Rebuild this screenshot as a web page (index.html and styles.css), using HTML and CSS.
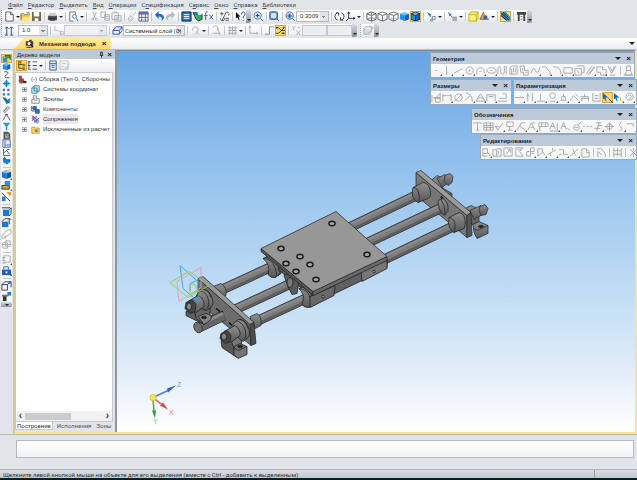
FILE: index.html
```html
<!DOCTYPE html>
<html lang="ru">
<head>
<meta charset="utf-8">
<meta name="viewport" content="width=device-width, initial-scale=1">
<title>Механизм подвода</title>
<link rel="stylesheet" href="styles.css">
</head>
<body>
<nav class="menu" aria-label="Главное меню">
  <a href="#"><u>Ф</u>айл</a><a href="#"><u>Р</u>едактор</a><a href="#"><u>В</u>ыделить</a><a href="#"><u>В</u>ид</a><a href="#"><u>О</u>перации</a><a href="#">С<u>п</u>ецификация</a><a href="#">С<u>е</u>рвис</a><a href="#"><u>О</u>кно</a><a href="#"><u>С</u>правка</a><a href="#"><u>Б</u>иблиотеки</a>
</nav>

<div class="bars">
  <div class="toolbar grip" role="toolbar" aria-label="Стандартная">
    <span class="tools" data-set="standard"></span><span class="cap"></span>
  </div>
  <div class="toolbar" role="toolbar" aria-label="Вид">
    <span class="tools" data-set="zoom"></span>
    <select class="combo scale" aria-label="Масштаб"><option>0.3009</option></select>
    <span class="tools" data-set="view"></span><span class="cap"></span>
  </div>
</div>

<div class="bars">
  <div class="toolbar grip" role="toolbar" aria-label="Текущее состояние">
    <span class="tools" data-set="step"></span>
    <select class="combo step" aria-label="Шаг курсора"><option>1.0</option></select>
    <span class="tools" data-set="state"></span>
    <select class="combo off" aria-label="Состояние" disabled><option></option></select>
    <span class="tools" data-set="layer"></span>
    <select class="combo layer" aria-label="Слой"><option>Системный слой (0)</option></select>
    <span class="tools" data-set="snap"></span>
    <input class="coord" aria-label="X" disabled><input class="coord" aria-label="Y" disabled><span class="cap"></span>
  </div>
  <div class="toolbar grip" role="toolbar" aria-label="Режимы">
    <span class="tools" data-set="mode"></span><span class="cap"></span>
  </div>
</div>

<div class="tabstrip">
  <div class="doctab">
    <svg viewBox="0 0 12 12" aria-hidden="true"><path d="M1 3h4l1-2h3v2h2v6H1z" fill="#444"/><circle cx="5.500" cy="6" r="2" fill="#fff"/><path d="M7 7l4 4M2 11h7" stroke="#222" stroke-width="1.500"/></svg>
    <span>Механизм подвода</span><button class="x" aria-label="Закрыть">×</button>
  </div>
  <button class="tri" aria-label="Список окон"></button>
</div>

<main class="work">
  <div class="sidebar" role="toolbar" aria-label="Компактная панель">
    <span class="tools first" data-set="side1"></span>
    <span class="tools" data-set="side2"></span><span class="cap"></span>
  </div>
  <section class="document">
    <aside class="tree">
      <header class="bar"><h2>Дерево модели</h2>
        <button aria-label="Закрепить"><svg viewBox="0 0 6 8"><path d="M1 5h4M2 5V1h2v4M3 5v3" stroke="#222" fill="none"/></svg></button><button class="x" aria-label="Закрыть">×</button></header>
      <div class="treetools"><span class="tools" data-set="tree"></span></div>
      <ul class="nodes">
        <li class="root"><svg viewBox="0 0 12 12"><path d="M1 1h4v4h3v3h3v3H2z" fill="#655"/><path d="M2 2l6 6M1 7l4 4" stroke="#d33" stroke-width="2"/><path d="M7 9h4" stroke="#222" stroke-width="2"/></svg>(-) Сборка (Тел-0, Сборочны</li>
        <li><button aria-label="Развернуть"></button><svg viewBox="0 0 12 12"><path d="M4 1h7v7H4zM1 4h7v7H1zM1 4l3-3M8 11l3-3" fill="#bfeaf5" stroke="#27759c"/></svg>Системы координат</li>
        <li><button aria-label="Развернуть"></button><svg viewBox="0 0 12 12"><path d="M3 1h4v4h4v6H1V6h2z" fill="#eee" stroke="#777"/><path d="M4 4v3h4" fill="none" stroke="#999"/></svg>Эскизы</li>
        <li><button aria-label="Развернуть"></button><svg viewBox="0 0 12 12"><path d="M1 1v7h5M1 4h5" fill="none" stroke="#222"/><path d="M3 2h4v4H3zM6 6h5v5H6z" fill="#267cd2" stroke="#154b99"/></svg>Компоненты</li>
        <li class="sel"><button aria-label="Развернуть"></button><svg viewBox="0 0 12 12"><path d="M1 1h6l4 5v5H6L1 6z" fill="#cdd2f4"/><path d="M2 1l9 8M1 4l8 7M1 8l7-7M4 10l7-6" stroke="#3c42ac"/><path d="M2 3l7 7M1 1l3 3" stroke="#c34b5c"/></svg><span>Сопряжения</span></li>
        <li><button aria-label="Развернуть"></button><svg viewBox="0 0 12 12"><path d="M1 3h4l1 1h5v7H1z" fill="#f5d56b" stroke="#bd912f"/><path d="M5 6h4v3H5z" fill="#777"/></svg>Исключенные из расчет</li>
      </ul>
      <div class="scroll"><button aria-label="Влево">‹</button><span class="thumb"></span><button aria-label="Вправо">›</button></div>
      <div class="treetabs"><button class="on">Построение</button><button>Исполнения</button><button>Зоны</button></div>
    </aside>

    <div class="viewport">
      <svg class="model" viewBox="117 50 518 382" preserveAspectRatio="xMidYMid slice" role="img" aria-label="Модель">
        <defs>
          <linearGradient id="body" x1="0" y1="0" x2="0" y2="1"><stop offset="0" stop-color="#909090"/><stop offset="1" stop-color="#575757"/></linearGradient>
          <g id="hole"><ellipse rx="3.800" ry="3" fill="#1c1c1c"/><ellipse rx="2.200" ry="1.500" fill="#aaa"/></g>
        </defs>
        <!-- far bearings -->
        <g stroke="#262626" stroke-width=".7" fill="url(#body)">
          <path d="M430 181l7-6 5 2v10l10 6v6l-8-3-10-9z"/>
          <path d="M437 178l8-4 5 7-8 6z"/><path d="M445 175l5-2 3 3-1 6-4 3-4-4z"/>
          <path d="M465 208l6-3 8 4v16l-8-1z"/><path d="M470 210l11-5 3 8-10 6z"/><path d="M480 206l5-2 3 4-2 6-5 1-2-5z"/>
          <path d="M473 224l6-3 9 4v8l-11 5-3-6z"/><path d="M474 228l3 2 11-5" fill="none"/><ellipse cx="481" cy="226" rx="2.500" ry="1.200" fill="#222"/>
        </g>
        <!-- far end plate -->
        <g stroke="#262626" stroke-width=".7">
          <path d="M416 172l51 43v22l-51-42z" fill="#777"/>
          <path d="M416 172l5-2 50 42-4 3z" fill="#9b9b9b"/><path d="M467 215l4-3 1 23-5 2z" fill="#555"/>
          <path d="M441 196l2 3" stroke="#111" stroke-width="2"/>
        </g>
        <!-- far rods -->
        <g stroke="#262626" stroke-width="10"><path d="M345 229L416 195M366 243L442 207M380 261L453 226"/></g>
        <g stroke="#5e5e5e" stroke-width="9"><path d="M345 229L416 195M366 243L442 207M380 261L453 226"/></g>
        <g stroke="#7d7d7d" stroke-width="5"><path d="M345 228L416 194M366 242L442 206M380 260L453 225"/></g>
        <g stroke="#8c8c8c" stroke-width="2"><path d="M345 226L416 192M366 240L442 204M380 258L453 223"/></g>
        <g stroke="#262626" stroke-width=".8" fill="url(#body)">
          <path d="M413 187l10-5q5 0 7 7t-2 9l-10 4q-8-4-5-15z"/><path d="M413 187q5 0 6 7t-1 8" fill="none"/>
          <path d="M438 200l5-2q6 4 5 13l-4 4q-6-5-6-15z"/><path d="M441 199q5 7 4 15" fill="none"/>
          <path d="M449 217l10-5q5 1 6 7t-1 9l-10 4q-7-4-5-15z"/><path d="M449 217q6 1 6 8t-1 7" fill="none"/>
        </g>
        <!-- near rods between end plate and table -->
        <g stroke="#262626" stroke-width="10"><path d="M220 290L270 267M203 324L291 283M256 321L308 297"/></g>
        <g stroke="#5e5e5e" stroke-width="9"><path d="M220 290L270 267M203 324L291 283M256 321L308 297"/></g>
        <g stroke="#7d7d7d" stroke-width="5"><path d="M220 289L270 266M203 323L291 282M256 320L308 296"/></g>
        <g stroke="#8c8c8c" stroke-width="2"><path d="M220 287L270 264M203 321L291 280M256 318L308 294"/></g>
        <!-- bushings under the table -->
        <g stroke="#222" stroke-width=".8" fill="url(#body)">
          <path d="M263 258l6-3 11 5 1 13-6 4q-4 1-7-3 3-10-5-16z"/><path d="M263 258q9 0 12 9t0 10M266 257q8 1 12 9t0 9" fill="none"/>
          <path d="M278 269l14 11 10 8v-8l-20-14z" fill="#555"/>
          <path d="M284 275l5-2 10 8-2 12-5 1-4-8z" fill="#5a5a5a"/><ellipse cx="290" cy="282" rx="3" ry="5" fill="#777"/>
          <path d="M310 293l25-9 26-12 26-14v9l-25 13-27 13-22 12z" fill="#606060"/>
          <path d="M361 271l26-12v9l-25 13z" fill="#777"/>
          <path d="M299 288l7-2q7 4 7 12v7l-5 2q-5 0-6-4 4-8-3-15z"/><path d="M299 288q9 1 11 9t-1 10M303 287q8 3 9 10" fill="none"/>
          <path d="M310 296l25-11-1 10-24 12z" fill="#686868"/>
          <circle cx="374" cy="271" r="1.300" fill="#999"/><circle cx="323" cy="296" r="1.300" fill="#999"/>
        </g>
        <!-- table -->
        <g stroke="#202020" stroke-width=".7">
          <path d="M261 248v3l52 44v-4z" fill="#555"/><path d="M313 291v4l74-35v-4z" fill="#6a6a6a"/>
          <path d="M261 248l75-37 51 45-74 35z" fill="#979797"/>
        </g>
        <use href="#hole" x="281" y="248"/><use href="#hole" x="300" y="256"/><use href="#hole" x="286" y="263"/><use href="#hole" x="310" y="264"/><use href="#hole" x="296" y="271"/><use href="#hole" x="316" y="279"/><use href="#hole" x="332" y="223"/><use href="#hole" x="367" y="254"/>
        <!-- near end plate -->
        <g stroke="#222" stroke-width=".7">
          <path d="M213 286l8-3q4 2 5 7v5l-8 4z" fill="url(#body)"/>
          <path d="M250 316l7-3q4 2 4 7v5l-8 4z" fill="url(#body)"/>
          <path d="M198 278l52 46 1 21-53-43z" fill="#6c6c6c"/>
          <path d="M198 278l5-2 51 46-4 2z" fill="#999"/><path d="M250 324l4-2 2 21-5 2z" fill="#4d4d4d"/>
          <path d="M216 308l4 3M218 313l5-2M229 322l3 3" stroke="#111" stroke-width="1.500"/>
        </g>
        <g stroke="#222" stroke-width="10"><path d="M199 327L224 315"/></g><g stroke="#656565" stroke-width="9"><path d="M199 327L224 315"/></g><g stroke="#8b8b8b" stroke-width="3"><path d="M198 325L223 313"/></g>
        <ellipse cx="198" cy="327" rx="4" ry="5.500" fill="#6e6e6e" stroke="#222" stroke-width=".7" transform="rotate(-24 198 327)"/>
        <!-- near bearings -->
        <g stroke="#222" stroke-width=".8" fill="url(#body)">
          <path d="M186 311l8-3 10 8v8l-18-9z" fill="#5d5d5d"/><path d="M194 308l16-6v15l-6 7-8-6z" fill="#646464"/><path d="M198 316l8-3 5 2v4l-7 5z" fill="#858585"/><ellipse cx="204" cy="317" rx="2.500" ry="1.200" fill="#222"/>
          <path d="M196 296l4-7q7-2 11 6t0 12l-5 3-8-3z"/><path d="M199 290q7 1 9 8t-1 10M203 289q6 1 8 8" fill="none"/>
          <path d="M188 301l10-6q7 3 6 11l-9 7z"/><path d="M186 302l6-3 4 5-1 7-5 2-5-5z" fill="#444"/><ellipse cx="189" cy="306" rx="2.500" ry="3.500" fill="#888"/>
          <path d="M221 340l8-3 8 12v8l-15-10z" fill="#575757"/><path d="M229 335l11-6 2 17-5 9z" fill="#777"/><path d="M234 346l6-3 7 3v8l-9 4-4-4z" fill="#747474"/><path d="M234 347l4 3 9-4" fill="none"/><ellipse cx="240" cy="346" rx="2.500" ry="1.200" fill="#222"/>
          <path d="M233 324l5-5q7-1 10 7t0 11l-5 4-8-6z"/><path d="M236 320q7 2 9 9t-1 10M240 319q6 2 8 9" fill="none"/>
          <path d="M224 331l11-6q6 4 5 10l-9 7z"/><path d="M221 333l6-3 4 5-1 6-5 2-5-5z" fill="#444"/><ellipse cx="224" cy="336" rx="2.500" ry="3.500" fill="#888"/>
        </g>
        <!-- datum planes -->
        <g fill="none" stroke-width=".9">
          <path d="M180 265l19 17v20l-16-14zM190 283l14-6M190 283v8" stroke="#3fa0e8"/><path d="M201 267v20l-22 14-2-20z" stroke="#ec9cae"/><path d="M170 282l19-11 20 14-21 12zM190 285v9l8-4-4-7z" stroke="#8ccf4a"/>
        </g>
        <!-- axis triad -->
        <path d="M153 397l15-7" stroke="#4a7fdc" stroke-width="1.600"/><path d="M167 388l9-3-8 7z" fill="#2d62c8"/>
        <path d="M153 397l10 8" stroke="#e35b5b" stroke-width="1.600"/><path d="M163 402l5 7-8-4z" fill="#e04242"/>
        <path d="M153 397l1 15" stroke="#56b060" stroke-width="1.600"/><path d="M152 410h4l-1 8z" fill="#2e9a3e"/>
        <circle cx="153" cy="397" r="3.200" fill="#f3e556" stroke="#c6b432" stroke-width=".6"/>
        <text x="177" y="386" fill="#7298dd">Z</text><text x="169" y="414" fill="#e07c86">X</text><text x="153" y="423" fill="#7cc486">Y</text>
      </svg>

      <section class="palette geo"><header class="bar"><h2>Геометрия</h2><button class="tri" aria-label="Меню"></button><button class="x" aria-label="Закрыть">×</button></header><div class="tools" data-set="geometry"></div></section>
      <section class="palette dim"><header class="bar"><h2>Размеры</h2><button class="tri" aria-label="Меню"></button><button class="x" aria-label="Закрыть">×</button></header><div class="tools" data-set="dimensions"></div></section>
      <section class="palette par"><header class="bar"><h2>Параметризация</h2><button class="tri" aria-label="Меню"></button><button class="x" aria-label="Закрыть">×</button></header><div class="tools" data-set="constraints"></div></section>
      <section class="palette ann"><header class="bar"><h2>Обозначения</h2><button class="tri" aria-label="Меню"></button><button class="x" aria-label="Закрыть">×</button></header><div class="tools" data-set="annotations"></div></section>
      <section class="palette edi"><header class="bar"><h2>Редактирование</h2><button class="tri" aria-label="Меню"></button><button class="x" aria-label="Закрыть">×</button></header><div class="tools" data-set="editing"></div></section>
    </div>
  </section>
</main>

<div class="properties"><input aria-label="Панель свойств" readonly></div>
<footer class="status"><span>Щелкните левой кнопкой мыши на объекте для его выделения (вместе с Ctrl - добавить к выделенным)</span></footer>
<script src="app.js"></script>
</body>
</html>
```

FILE: styles.css
```css
* { box-sizing: border-box; }
body {
  margin: 0; height: 100vh; overflow: hidden;
  display: flex; flex-direction: column;
  background: #e1e5e9; color: #333;
  font: 6px/10px "Liberation Sans", Arial, sans-serif;
  border-bottom: 2px solid #0c1c20;
}
button, select, input { font: inherit; color: inherit; margin: 0; padding: 0; border: 0; background: none; }
svg { display: block; flex: none; }

.menu { display: flex; gap: 5px; padding-left: 8px; height: 10px; flex: none; white-space: nowrap; font-family: Roboto, "Liberation Sans", sans-serif; }
.menu a { color: #444a52; text-decoration: none; }

.bars { display: flex; gap: 2px; height: 13px; flex: none; margin-bottom: 1px; }
.toolbar { display: flex; align-items: center; height: 13px; background: linear-gradient(#fff, #f3f5f7 60%, #dfe3e7); }
.grip { border-left: 1px dotted #9aa; margin-left: 1px; padding-left: 2px; }
.tools { display: flex; align-items: center; flex: none; }
.tool { position: relative; width: 11px; height: 11px; flex: none; display: flex; align-items: center; justify-content: center; }
.tool svg { width: 11px; height: 11px; }
.tool.on { background: #ffd873; outline: 1px solid #d9a640; outline-offset: -1px; }
.tool.more::after { content: ""; position: absolute; right: 0; bottom: 0; border: 1px solid #555; border-top-color: transparent; border-left-color: transparent; }
.sep { width: 5px; height: 9px; flex: none; background: linear-gradient(#c3c8ce, #c3c8ce) center / 1px 100% no-repeat; }
.drop, .tri { width: 5px; height: 11px; flex: none; display: grid; place-items: center; }
.drop::after, .tri::after { content: ""; border: 2px solid transparent; border-top-color: #222; border-bottom: 0; }
.tri::after { border-width: 3px; border-bottom: 0; }
.cap { width: 5px; align-self: stretch; flex: none; border-radius: 0 2px 2px 0; background: linear-gradient(#d5dade, #8e959c); display: grid; align-items: end; justify-items: center; padding-bottom: 2px; }
.cap::after { content: ""; border: 2px solid transparent; border-top-color: #222; border-bottom: 0; }

.combo {
  appearance: none; height: 11px; padding-left: 3px; border: 1px solid #b4bac1; line-height: 9px;
  background: linear-gradient(45deg, transparent 50%, #888 50%) right 4px center / 2px 2px no-repeat, linear-gradient(-45deg, transparent 50%, #888 50%) right 2px center / 2px 2px no-repeat, linear-gradient(#e2e5e9, #e2e5e9) right / 8px 100% no-repeat, #fff;
}
.scale { width: 33px; }
.step { width: 30px; margin-left: 3px; }
.off { width: 43px; background-color: #eef0f2; }
.layer { width: 62px; padding-left: 1px; font-family: Roboto, "Liberation Sans", sans-serif; }
.coord { width: 25px; height: 11px; border: 1px solid #c3c8cc; background: #eceef0; }

.tabstrip { flex: none; height: 12px; display: flex; justify-content: space-between; padding-left: 14px; background: linear-gradient(#fff, #e9edf0); border-bottom: 1px solid #c9bf83; }
.doctab { display: flex; align-items: center; gap: 5px; padding: 0 3px 0 11px; font-weight: bold; color: #333; background: linear-gradient(#ffed9b, #ffd76c); clip-path: polygon(10px 0, 100% 0, 100% 100%, 0 100%); }
.doctab svg { width: 9px; height: 9px; }
.x { width: 7px; font: bold 8px/8px "Liberation Sans", sans-serif; color: #222; text-align: center; }
.tabstrip .tri { width: 10px; }

.work { flex: 1; min-height: 0; display: flex; }
.sidebar { width: 11px; margin: 2px 1px 0 1px; align-self: flex-start; display: flex; flex-direction: column; align-items: center; padding-top: 2px; background: #f6f8fa; border-radius: 2px; }
.sidebar .tools { flex-direction: column; }
.sidebar .first { height: 111px; }
.sidebar .first .tool { flex: 1; min-height: 0; }
.sidebar .first svg { width: 9px; height: 9px; }
.sidebar .sep { width: 8px; height: 4px; background: linear-gradient(#c3c8ce, #c3c8ce) center / 100% 1px no-repeat; }
.sidebar .cap { width: 11px; height: 5px; padding: 1px; }

.document { flex: 1; min-width: 0; display: flex; border: 2px solid #f6e58c; border-left-color: #dcc68c; border-top: 0; }
.tree { width: 102px; flex: none; display: flex; flex-direction: column; background: #e1e5ea; border-right: 2px solid #8f979f; }
.bar { display: flex; align-items: center; height: 11px; flex: none; padding: 0 2px; background: #bccad9; }
.bar h2 { flex: 1; margin: 0; font-size: 6px; font-weight: bold; color: #222; }
.bar svg { width: 5px; height: 7px; }
.tree .bar { gap: 2px; height: 9px; }
.tree .bar h2 { font-weight: normal; }
.treetools { height: 13px; flex: none; background: linear-gradient(#fff, #e9ecef); padding: 1px; }
.nodes { flex: 1; margin: 0 2px 0 0; padding: 1px 0; list-style: none; overflow: hidden; background: #fff; border: 1px solid #c6cbd1; border-bottom: 0; white-space: nowrap; }
.nodes li { display: flex; align-items: center; height: 10px; gap: 3px; padding-left: 6px; }
.nodes .root { padding-left: 2px; gap: 4px; }
.nodes svg { width: 9px; height: 9px; }
.nodes button { width: 5px; height: 5px; margin-right: 1px; border: 1px solid #b4bac0; background: linear-gradient(#777, #777) center / 3px 1px no-repeat, linear-gradient(#777, #777) center / 1px 3px no-repeat; }
.sel span { background: #ece8ee; }
.scroll { display: flex; flex: none; height: 11px; margin-right: 2px; background: #f1f2f3; border: 1px solid #c6cbd1; border-top: 0; align-items: center; }
.scroll button { width: 9px; font: bold 10px/8px "Liberation Sans", sans-serif; }
.scroll button:last-child { margin-left: auto; }
.thumb { width: 46px; height: 7px; background: #ccc; }
.treetabs { display: flex; gap: 3px; height: 10px; flex: none; color: #555; font-family: Roboto, "Liberation Sans", sans-serif; }
.treetabs button { height: 8px; padding: 0 1px; line-height: 8px; }
.treetabs .on { background: #fff; border: 1px solid #c6cbd1; border-top: 0; color: #333; }

.viewport { position: relative; flex: 1; min-width: 0; background: linear-gradient(#68a4e3, #91c0ec 29%, #c4dff5 66%, #e2edf8 84%, #fff); border-top: 1px solid #7b8c9b; }
.model { width: 100%; height: 100%; }
.model text { font: 7px "Liberation Sans", sans-serif; }

.palette { position: absolute; border: 1px solid #9aa9b8; background: linear-gradient(#fff, #f2f4f6); overflow: hidden; height: 26px; }
.palette .bar { gap: 4px; }
.palette .tri { width: 6px; }
.palette .tools { height: 13px; }
.geo { top: 1px; right: 0; width: 205px; }
.dim { top: 28px; right: 123px; width: 82px; }
.par { top: 28px; right: -2px; width: 124px; }
.ann { top: 57px; right: -2px; width: 166px; }
.edi { top: 83px; right: -2px; width: 157px; }

.properties { flex: none; height: 35px; padding: 5px 3px 0 16px; border-top: 1px solid #b9bcb0; }
.properties input { width: 100%; height: 18px; border: 1px solid #b5bac0; background: linear-gradient(#fff, #f0f2f5); }
.status { flex: none; height: 9px; display: flex; padding-left: 3px; line-height: 9px; white-space: nowrap; color: #333; background: linear-gradient(#d9dde1, #c4c9cf); border-top: 1px solid #aeb4ba; font-family: Roboto, "Liberation Sans", sans-serif; }
.status span { width: 592px; border-right: 1px solid #9ba1a8; }
```

FILE: app.js
```js
// Each tool: [label, flags, drawing]. Flags: m = has submenu corner, o = pressed.
// Drawing: parts split by "|"; "#abc d" strokes the path, "f#abc d" fills it.
const S = '|', D = 'v';
const G = '#a6a6a6 ';
const arrow = 'M1 1l6 5H4l1 4H4L3 7 1 8z';
const cube = (a, b, c) => `f${a} M6 1l5 2-5 2-5-2z|f${b} M1 3l5 2v6L1 9z|f${c} M11 3L6 5v6l5-2z`;
const wire = c => `${c} M6 1l5 2v6l-5 2-5-2V3zM1 3l5 2 5-2M6 5v6`;
const lens = 'f#cfe4f6 M5 1a4 4 0 1 0 .1 0|#456b9c M5 1a4 4 0 1 0 .1 0M8 8l3 3';
const g = (n, d, f = 'm') => [n, f, G + d];

const sets = {
  standard: [
    ['Создать', '', 'f#fff M2 1h5l3 3v7H2z|#555 M2 1h5l3 3v7H2zM7 1v3h3'], D,
    ['Открыть', '', 'f#e8b93a M1 4h4l1 1h4v5H1z|f#ffe27d M3 6h9l-3 5H1z|#7b7022 M1 10V3h3l1 1h4M7 2h3v3'],
    ['Сохранить', '', 'f#776b4a M1 1h10v10H1z|f#fff M3 1h6v5H3zM4 8h4v3H4z'], S,
    ['Печать', '', 'f#555 M1 5h10v5H1z|f#ccc M3 2h7L9 5H2z|#222 M2 8h8M3 10h6'], D, S,
    ['Просмотр', '', 'f#fff M2 1h6v10H2z|#668 M2 1h6v3M2 1v10h4|#2864a6 M7 4a2 2 0 1 0 .1 0M9 8l2 3'], D, S,
    ['Вырезать', '', '#aaa M4 1l3 7M8 1L5 8M4 8a1 1 0 1 0 .1 0M8 8a1 1 0 1 0 .1 0'],
    ['Копировать', '', '#aaa M1 1h5v6H1zM5 4h5v6H5zM6 6h3M6 8h3'],
    ['Вставить', '', '#aaa M1 2h7v7H1zM4 5h7v6H4zM3 1h3M6 7h3M6 9h3'], S,
    ['Кисть', '', '#aaa M10 1L6 5M4 5l3 3-3 3-3-2z'],
    ['Свойства', '', 'f#5c6fc4 M1 1h10v3H1z|#667 M1 1h10v10H1zM4 4v7M8 4v7M1 7h10'], S,
    ['Отменить', '', 'f#1c6fd6 M1 4l4-4v3q6 0 6 5l-3 3q2-5-3-5v3z'],
    ['Повторить', '', 'f#b5bcc3 M11 4L7 0v3q-6 0-6 5l3 3q-2-5 3-5v3z'], S,
    ['Менеджер', '', 'f#1a7cc4 M1 1h10v10H1z|#fff M3 4h6M3 6h6M3 8h6|#124 M1 1h10v10H1z'],
    ['Библиотеки', '', 'f#1689a0 M1 1h5l1 4H2z|f#3aaa5c M4 4h7v5l-4 2-4-3z|#234 M1 1l3 7 3 3 4-2V3'],
    ['Переменные', '', '#3350a8 M5 1H4q-1 0-1 2v7M1 5h4M7 4l4 5M11 4L7 9'], S,
    ['Обновить', '', '#555 M1 3h4M3 1v4M7 3a2 2 0 1 1 3 2M2 8a2 2 0 1 0 3-1M7 8h4M7 10h4M8 1l-5 10'], S,
    ['Справка', '', 'f#111 M1 1l5 5H4l1 4H4L3 7 1 8z|#24469c M7 4q0-3 2-3t2 2-2 3v2M9 10v1'],
  ],
  zoom: [
    ['Рамка', '', lens + '|#234 M3 5h4M5 3v4'], S,
    ['Масштаб', '', lens + '|#249 M1 1h8v8H1z'], S,
    ['Приблизить', '', lens + '|f#2864a6 M4 3h2v2h2v1H6v2H4V6H2V5h2z']],
  view: [S,
    ['Повернуть', '', '#333 M4 2Q1 3 1 6t3 4M8 10q3-1 3-4T8 2M2 2h3v3M10 10H7V7'],
    ['Ориентация', '', '#234 M4 1v7h7M4 8l-3 3M3 3l1-2 1 2M9 7l2 1-2 1'], D, S,
    ['Каркас', '', wire('#555') + '|#888 M1 9l5-2 5 2M6 1v6'],
    ['Без невидимых линий', '', wire('#666')],
    ['Невидимые тонкие', '', wire('#666') + '|#bbb M1 9l5-2 5 2'],
    ['Полутоновое', '', cube('#67c4fb', '#1893ed', '#0b62c4')],
    ['Полутоновое с каркасом', 'o', cube('#67c4fb', '#1893ed', '#0b62c4') + S + wire('#124')], S,
    ['Упрощенный', '', 'f#27a M1 1l5 3-2 2z|#789 M4 5l2 2M7 6h3v3H7zM5 9h2v2H5z'], D, S,
    ['Фильтр', '', 'f#27a M1 1l4 3-2 2z|#567 M3 4l3 3|f#aaa M6 6h5v5H6z'], D, S,
    ['Сечение', '', 'f#fff47a M3 1h8v7l-2 3H1V4z|#b8a91c M3 1h8v7l-2 3H1V4l2-3M1 4h8v7M9 4l2-3'],
    ['Слои', '', 'f#e9a425 M5 1l5 8H1z|f#2867c2 M5 5h4v4H5z|#952 M5 1L1 9h10'], D, S,
    ['Перестроить', 'o', 'f#248fc8 M1 2l5-1 5 5v4l-4 1-6-6z|#124 M1 2l9 8M3 1l6 6M1 5l6 5'], S,
    ['Экран', '', 'f#444 M1 1h10v3H1zM2 4h2v7H2zM8 4h2v7H8z|#777 M5 6h2M5 9h2']],
  step: [['Шаг', '', '#234a80 M3 2v9M8 2v9M1 4l2-2 2 2M6 4l2-2 2 2M1 11h3M7 11h3']],
  state: [S, ['Номер', '', '#bbb M2 1v5h4M6 6l4 4M8 7h3v4H8z']],
  layer: [S, ['Слой', '', 'f#dce8fb M4 2h7L8 6H1z|#3a4fa6 M4 2h7L8 6H1zM1 6v4h7l3-4V2M8 6v4']],
  snap: [S,
    ['Стиль', '', '#aaa M3 6a3 3 0 1 1 5 1l-3 3M7 8l3 2'], D, S,
    ['Привязка', '', '#aaa M2 3a3 3 0 1 1 5 3M2 9h8M7 4l3 7'], S,
    ['Сетка', '', '#aaa M3 1v10M6 1v10M9 1v10M1 3h10M1 6h10M1 9h10'], D, S,
    ['ЛСК', '', '#aaa M2 1v8h9M1 3l1-2 1 2M9 8l2 1-2 1'], S,
    ['Ортогонально', '', '#888 M1 10h5V2h5'],
    ['Привязки', 'o', '#333 M1 3h3l3 3h4M1 9h3l7-7M7 9h4M2 2v2M9 8v2M9 2v2'], S,
    ['Координаты', '', '#aaa M1 1l2 2 2-2M3 3v3M6 6l4 5M10 6l-4 5M7 3h3']],
  mode: [['Эскиз', '', 'f#ddd M1 4h6v6H1z|#aaa M1 4l2-2h6v6l-2 2H1zM8 1l3 2-5 6']],
  tree: [
    ['Дерево', 'o', '#333 M3 1v8h5M3 5h5|f#a67c20 M2 1h4v3H2zM7 4h3v3H7zM7 8h3v3H7z'],
    ['Состав', '', '#3c5078 M2 1v9M1 2h3M1 6h3M1 10h3M6 2h5M6 6h5M6 10h5'], D, S,
    ['Отношения', '', 'f#dfe7f7 M2 1h7v10H2z|#455c98 M2 1h7v10H2zM2 4h7M4 6h3M4 8h3'],
    ['Окно', '', '#bbb M1 1h9v9H1zM3 4h5M3 7h2M6 7l2 2 3-5']],
  side1: [
    ['Редактирование', 'o', 'f#2b8eda M1 5h6v6H1z|f#36a04a M4 2h7v4H4z|#234 M1 5l3-3h7v6'],
    ['Детали', '', cube('#67c4fb', '#1893ed', '#0b62c4')],
    ['Кривые', '', '#333 M3 1h4q3 2-1 4t-1 4h5'],
    ['Поверхности', '', 'f#4bb1ee M6 1l5 5-5 5-5-5z|#136ab0 M1 6h10M6 1v10'],
    ['Массивы', '', 'f#3a6ce0 M1 1h3v3H1zM7 1h3v3H7zM1 7h3v3H1zM7 7h3v3H7z'],
    ['Геометрия', '', 'f#1b8fc4 M1 2h4l2 3 4-2v5l-5 3-2-4z|#135 M1 2l9 8'],
    ['Сопряжения', '', '#555 M2 8l6-6 2 2-6 6-2-1 5-5'],
    ['Измерения', '', '#333 M1 10l5-8 5 8M4 2h4'],
    ['Фильтры', '', 'f#2999dd M1 1h10L7 6v5H5V6z'],
    ['Спецификация', '', 'f#555 M2 1h6l3 3v7H2z|#ddd M4 5h5M4 7h5M4 9h5'],
    ['Отчеты', '', 'f#dde8fb M1 1h10v10H1z|#3753a8 M1 1h10v10H1zM4 1v10M5 8h6'],
    ['Оформление', '', '#246 M2 1v9h9M2 7l4-4 4 5M7 2h3'],
    ['Листовое тело', '', 'f#1f7ed8 M3 1l3 4h5v3l-4 3-5-2-1-5z|#146 M3 1l3 4h5']],
  side2: [S,
    ['Создать деталь', 'm', cube('#67c4fb', '#1878d0', '#0b52a4') + '|f#ffd63b M8 0h3v3H8z'],
    ['Добавить', 'm', 'f#c9a531 M1 6h8v4H1z|#333 M1 6h8v4H1z|f#2b8eda M4 1h6v5H4z'],
    ['Выровнять', '', '#335 M1 2l9 9|f#e2a03b M6 1h5v4H9z|f#3178cc M1 6h4v5H1z'], S,
    ['Выдавить', '', 'f#2276cd M2 4h7v7H2z|#134 M1 2h9M9 4l2-2v6l-2 3'],
    ['Сдвинуть', '', 'f#2276cd M1 5h7v6H1z|#134 M1 5l3-3h5v6M9 1l2 2'],
    ['Тело', '', '#aaa M1 8l6-6h4v4L6 9H3M1 8v3h4V9'],
    ['Оболочка', '', '#aaa M2 4h5v6H2zM5 2h5v6H5zM1 6h10'], S,
    ['Область', 'm', '#aaa M3 2h7v7H3zM1 4h4M1 7h4M1 10h4'],
    ['Закрепить', 'm', 'f#1e5fb4 M1 5h10v6H1z|#1e5fb4 M3 5V2h5v3|f#fff M5 7h2v2H5z'], S,
    ['Вид', '', '#334 M1 5h6v6H1zM4 2h7v6M1 5l3-3M7 5l4-3|f#3178cc M8 1h3v3H8z'],
    ['Разнести', '', 'f#333 M2 5h4v6H2z|f#777 M1 4h7v2H1z|f#3178cc M7 1h4v4H7z']],
  geometry: [g('Точка', 'M5 6h2'), g('Вспомогательная', 'M5 1v10'), g('Отрезок', 'M1 9l9-5'),
    g('Окружность', 'M6 2a4 4 0 1 0 .1 0M5 6h2M6 5v2'), g('Дуга', 'M2 10Q1 3 6 3t4 6M5 7h2'),
    g('Эллипс', 'M6 3a5 3 0 1 0 .1 0M5 6h2'), g('Непрерывный ввод', 'M1 10V3q3-3 3 1v4q2 5 4 0V1M10 1v9', ''),
    g('Линия', 'M2 3l3-2h5v9H4V4M2 3v7h3M6 3v5M8 3v5', ''), g('Мультилиния', 'M1 1h5v5h4v5H5V8H2zM4 3v3M7 8h2', ''),
    g('Сплайн', 'M1 9q3-9 5-3t5-4'), g('Фаска', 'M1 2h4l5 6v3'), g('Скругление', 'M1 2q8-1 9 8'),
    g('Прямоугольник', 'M1 3h9v6H1z'), g('Контур', 'M3 1h8v7H8M1 4h7v7H1zM3 6l3 3', ''), g('Штриховка', 'M1 10l7-9M5 10l6-8M3 11l7-9'),
    g('Эквидистанта', 'M1 2h6v3h4v6H5V8H1z'), g('Проекция', 'M1 1l4 8 5-8M3 2l3 5 2-6M3 11h6', ''), S,
    g('Библиотека', 'M4 1h4v5H4zM2 11l2-5h4l2 5zM1 11h10', '')],
  dimensions: [g('Авторазмер', 'M1 3v8M10 1v7M2 6h8M3 8l7-6M5 7h5v4H5z', ''), g('Линейный', 'M1 2v8M10 2v8M1 4h9'),
    g('Диаметральный', 'M6 2a4 4 0 1 0 .1 0M2 10l8-8', ''), g('Радиальный', 'M2 1q7 1 7 9M1 9l6-5'),
    g('Угловой', 'M1 10l5-8 5 8zM3 7q3-2 6 0'), g('Дуги', 'M1 10V3h9v7M3 5h5'), g('Высоты', 'M1 10h10M3 7h7V2H6', '')],
  constraints: [g('Горизонталь', 'M1 6h10'), g('Вертикаль', 'M3 1v9M8 1v9M1 5l2-2 2 2'), g('Перпендикуляр', 'M5 2v8M1 10h9'),
    g('Касание', 'M6 1a3 3 0 1 0 .1 0M3 10h6'), g('Фиксация', 'M4 9V5h4v4M6 5V2M3 9h6'), g('Равенство', 'M1 9l4-5 5 5M7 2l3 3'),
    g('Симметрия', 'M2 10V5h7v5M5 2v4M1 7h9', ''), g('Размеры', 'M2 1v9h8V1M4 4h4M4 7h4', ''),
    ['Ограничения', 'om', 'f#1669c0 ' + arrow + '|#333 M7 7l4 4'], ['Показать', 'm', 'f#1669c0 ' + arrow + '|#d8b02a M8 6v4'],
    g('Степени свободы', 'M6 1a4 4 0 1 0 .1 0M4 5q2-4 4 0l-2 3')],
  annotations: [g('Текст', 'M2 3V2h8v1M6 2v8M4 10h4', ''), g('Таблица', 'M1 2h10v8H1zM1 5h10M1 7h10M4 2v8M8 2v8', ''),
    g('Шероховатость', 'M2 6l2 4 6-8M1 6h5'), g('База', 'M2 1h7v5H2zM5 6v4M3 10h5'), g('Выноска', 'M1 10l5-8h4M4 5l6 5'),
    g('Позиции', 'M1 10l4-8h4M5 3l4 7M4 7h3'), g('Допуск', 'M1 2h10v4H1zM4 2v4M8 2v4M2 6v5', ''), g('Разрез', 'M1 9l3-7 3 7M2 6h4M9 2v8M1 11h10'),
    g('Стрелка', 'M1 9l3-7 3 7M2 6h4M8 8l3 2', ''), g('Вид', 'M6 4a3 3 0 1 0 .1 0M8 4l3-3M4 7h4'), g('Осевая', 'M1 6h2M5 6h2M9 6h2', ''),
    g('Автоосевая', 'M3 2h6M5 5h5M1 8h7M7 1L4 11'), g('Центр', 'M6 1v10M1 6h10M6 3a3 3 0 1 0 .1 0', ''), g('Волна', 'M7 1Q3 4 6 6t0 5'), g('Излом', 'M1 3h7v3')],
  editing: [g('Сдвиг', 'M2 2h5v5H2zM7 5l3 5M2 7v3h5'), g('Поворот', 'M1 3h4v7H1zM5 2h5v8H5M7 4v4', ''), g('Масштаб', 'M1 1h9v9H1zM3 8l5-5M5 3h3v3', ''),
    g('Симметрия', 'M2 1h8L6 5l4 5H2zM4 3h4', ''), g('Копия', 'M6 1h4v4H6zM2 5h4v5H2zM7 7h3'), g('Деформация', 'M2 2h5v4l-5 4zM7 5l3 4'),
    g('Усечь', 'M1 8l9-5M6 1v3M4 7v3'), g('Разбить', 'M1 3h5v5h5M4 8H1'), g('Продлить', 'M1 10l9-8M4 2l3 7'), g('Очистить', 'M2 2h5l3 3v6H2zM7 2v4h3', ''), S,
    g('Спираль', 'M1 2h5l4 5v4M2 11V5l4 3', ''), S, g('Размеры', 'M2 1v10M10 1v10M2 4h8M2 8h8M6 1v9', ''), S, g('Узел', 'M2 2l8 8M10 2l-8 8M6 1v3M6 8v3', '')],
};

function draw(parts) {
  return parts.split('|').map(p => {
    const fill = p[0] === 'f';
    const cut = p.indexOf(' ');
    const color = p.slice(fill ? 1 : 0, cut);
    return `<path d="${p.slice(cut + 1)}" fill="${fill ? color : 'none'}" stroke="${fill ? 'none' : color}"/>`;
  }).join('');
}

document.querySelectorAll('[data-set]').forEach(box => {
  box.innerHTML = sets[box.dataset.set].map(t => {
    if (t === S) return '<span class="sep"></span>';
    if (t === D) return '<span class="drop"></span>';
    const cls = 'tool' + (t[1].includes('o') ? ' on' : '') + (t[1].includes('m') ? ' more' : '');
    return `<button class="${cls}" aria-label="${t[0]}"><svg viewBox="0 0 12 12">${draw(t[2])}</svg></button>`;
  }).join('');
});
```
